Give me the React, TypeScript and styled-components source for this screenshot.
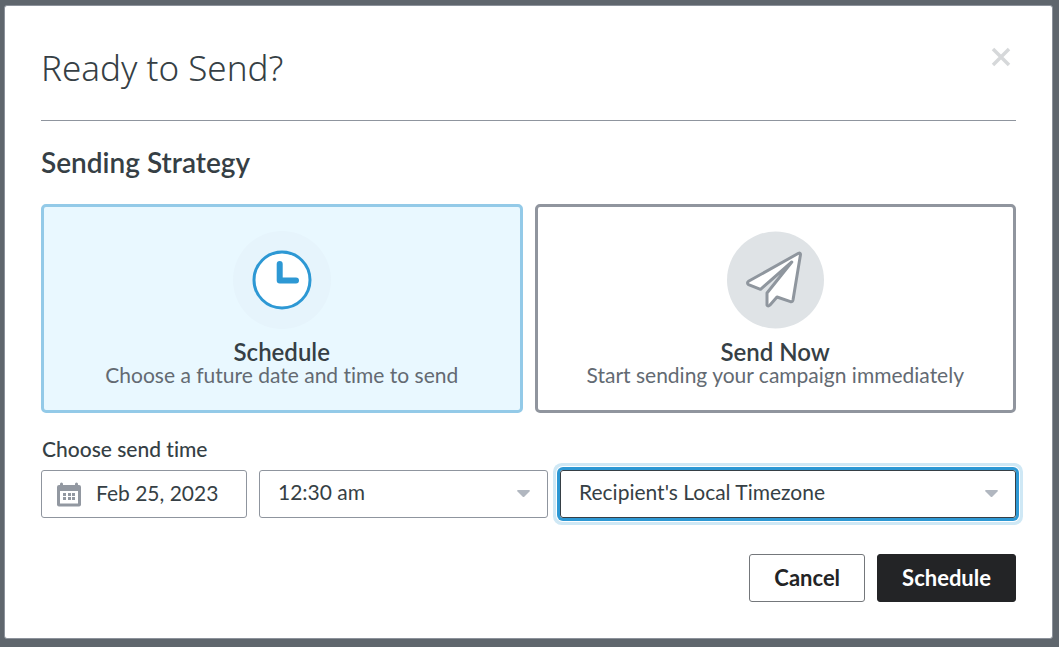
import React, { useState } from "react";
import styled, { createGlobalStyle } from "styled-components";

const GlobalStyle = createGlobalStyle`
  *, *::before, *::after { box-sizing: border-box; }
  body {
    margin: 0;
    background: #5f666d;
    color: #363f45;
    font-family: Lato, "Liberation Sans", sans-serif;
    font-size: 21px;
    line-height: 24px;
    font-variant-ligatures: none;
  }
  h1, h2 { margin: 0; }
  button, input, select { font: inherit; color: inherit; font-variant-ligatures: none; }
`;

const Backdrop = styled.div`
  min-height: 100vh;
  padding: 5px 6px 8px 4px;
`;

const Dialog = styled.main`
  border: 1px solid #8c929b;
  border-radius: 3px;
  background: #fff;
  padding: 36px;
`;

const Header = styled.header`
  display: flex;
  justify-content: space-between;
  align-items: flex-start;
  height: 79px;
  border-bottom: 1px solid #8f959e;
`;

const Title = styled.h1`
  font: 300 35px/52px "Noto Sans", "Open Sans", sans-serif;
`;

const CloseButton = styled.button`
  display: flex;
  padding: 5px;
  border: 0;
  background: none;
  cursor: pointer;
`;

const SectionTitle = styled.h2`
  margin-top: 25px;
  font-size: 28px;
  line-height: 32px;
  font-weight: 600;
`;

const Options = styled.div`
  display: grid;
  grid-template-columns: 1fr 1fr;
  gap: 12px;
  margin-top: 26px;
`;

const Option = styled.label<{ $selected: boolean }>`
  display: flex;
  flex-direction: column;
  align-items: center;
  height: 209px;
  padding-top: 24px;
  border: 3px solid ${(p) => (p.$selected ? "#93cae8" : "#90959e")};
  border-radius: 5px;
  background: ${(p) => (p.$selected ? "#e9f8ff" : "#fff")};
  text-align: center;
  cursor: pointer;
`;

const HiddenRadio = styled.input`
  position: absolute;
  opacity: 0;
  pointer-events: none;
`;

const OptionName = styled.span`
  margin-top: 11px;
  font-size: 24px;
  font-weight: 600;
`;

const OptionText = styled.span`
  color: #636a72;
  line-height: 22px;
`;

const FieldSet = styled.fieldset`
  min-width: 0;
  margin: 24px 0 0;
  padding: 0;
  border: 0;
`;

const Legend = styled.legend`
  padding: 0 1px;
  font-weight: 500;
`;

const Fields = styled.div`
  display: grid;
  grid-template-columns: minmax(0, 206fr) minmax(0, 289fr) minmax(0, 456fr);
  gap: 12px;
  margin-top: 9px;
`;

const Field = styled.div<{ $focused?: boolean }>`
  display: flex;
  align-items: center;
  position: relative;
  height: 48px;
  border: 1px solid ${(p) => (p.$focused ? "#363f45" : "#8f959e")};
  border-radius: 3px;
  box-shadow: ${(p) =>
    p.$focused
      ? "0 0 0 3px #2d98d4, 0 0 0 4px #fff, 0 0 0 7px #cfe8f5"
      : "none"};
`;

const DateInput = styled.input`
  flex: 1;
  min-width: 0;
  height: 100%;
  padding: 0 0 4px 14px;
  border: 0;
  outline: 0;
  background: none;
`;

const CalendarSlot = styled.span`
  display: flex;
  padding: 2px 0 0 14px;
`;

const Select = styled.select`
  appearance: none;
  width: 100%;
  height: 100%;
  padding: 0 48px 4px 18px;
  border: 0;
  outline: 0;
  background: none;
`;

const Arrow = styled.svg`
  position: absolute;
  right: 17px;
  pointer-events: none;
`;

const Footer = styled.footer`
  display: flex;
  justify-content: flex-end;
  gap: 12px;
  margin-top: 36px;
`;

const Button = styled.button<{ $primary?: boolean }>`
  height: 48px;
  padding: 0 24px;
  border: 1px solid ${(p) => (p.$primary ? "#232426" : "#74777b")};
  border-radius: 3px;
  background: ${(p) => (p.$primary ? "#232426" : "#fff")};
  color: ${(p) => (p.$primary ? "#fff" : "#232426")};
  font-size: 22px;
  font-weight: 700;
  cursor: pointer;
`;

const ClockIcon = () => (
  <svg width="98" height="98" viewBox="0 0 98 98" aria-hidden="true">
    <circle cx="49" cy="49" r="49" fill="#e6f4fc" />
    <circle cx="49" cy="49" r="28" fill="#fff" stroke="#2d98d4" strokeWidth="3" />
    <path d="M46.7 33V49.5H63" fill="none" stroke="#2d98d4" strokeWidth="6" strokeLinecap="round" strokeLinejoin="round" />
  </svg>
);

const PlaneIcon = () => (
  <svg width="98" height="98" viewBox="0 0 98 98" aria-hidden="true">
    <circle cx="49.500" cy="49" r="48.500" fill="#dfe3e6" />
    <path
      d="M72.500 22.300 22.500 50.300Q20.500 52 22.500 53.600L34.500 58.300 65.800 31 41 62V74Q42 76 44 74L51 66 64.500 70.700Q66.500 71 67 69L74.500 23.500Q74.500 21.500 72.500 22.300Z"
      fill="#fff"
      stroke="#8f969e"
      strokeWidth="3"
      strokeLinejoin="round"
    />
  </svg>
);

const CalendarIcon = () => (
  <svg width="26" height="26" viewBox="0 0 26 26" aria-hidden="true">
    <path d="M3 3H4V2a1.500 1.500 0 0 1 3 0V3H19V2a1.500 1.500 0 0 1 3 0V3H23a2 2 0 0 1 2 2V22.500a2 2 0 0 1-2 2H3a2 2 0 0 1-2-2V5a2 2 0 0 1 2-2Z" fill="#9298a1" />
    <rect x="4" y="9" width="18" height="12.500" fill="#fff" />
    <path d="M7 11h3v3h-3zM12 11h3v3h-3zM16 11h3v3h-3zM7 15h3v3h-3zM12 15h3v3h-3zM16 15h3v3h-3z" fill="#9298a1" />
  </svg>
);

const ArrowIcon = () => (
  <Arrow width="13" height="8" viewBox="0 0 13 8" aria-hidden="true">
    <path d="M1 0H12Q13.500 .5 12.500 1.500L7.500 6.500Q6.500 7.500 5.500 6.500L.5 1.500Q-.5 .5 1 0Z" fill="#b1b7c0" />
  </Arrow>
);

export default function App() {
  const [strategy, setStrategy] = useState("schedule");
  return (
    <>
      <GlobalStyle />
      <Backdrop>
        <Dialog role="dialog" aria-labelledby="dialog-title">
          <Header>
            <Title id="dialog-title">Ready to Send?</Title>
            <CloseButton type="button" aria-label="Close">
              <svg width="20" height="20" viewBox="0 0 20 20" aria-hidden="true">
                <path d="M2 2 18 18M18 2 2 18" stroke="#d6d8da" strokeWidth="3.500" />
              </svg>
            </CloseButton>
          </Header>
          <SectionTitle id="strategy-title">Sending Strategy</SectionTitle>
          <Options role="radiogroup" aria-labelledby="strategy-title">
            <Option $selected={strategy === "schedule"}>
              <HiddenRadio type="radio" name="strategy" checked={strategy === "schedule"} onChange={() => setStrategy("schedule")} />
              <ClockIcon />
              <OptionName>Schedule</OptionName>
              <OptionText>Choose a future date and time to send</OptionText>
            </Option>
            <Option $selected={strategy === "now"}>
              <HiddenRadio type="radio" name="strategy" checked={strategy === "now"} onChange={() => setStrategy("now")} />
              <PlaneIcon />
              <OptionName>Send Now</OptionName>
              <OptionText>Start sending your campaign immediately</OptionText>
            </Option>
          </Options>
          <FieldSet>
            <Legend>Choose send time</Legend>
            <Fields>
              <Field>
                <CalendarSlot>
                  <CalendarIcon />
                </CalendarSlot>
                <DateInput type="text" aria-label="Date" defaultValue="Feb 25, 2023" />
              </Field>
              <Field>
                <Select aria-label="Time" defaultValue="12:30 am">
                  <option>12:30 am</option>
                </Select>
                <ArrowIcon />
              </Field>
              <Field $focused>
                <Select aria-label="Timezone" defaultValue="Recipient's Local Timezone">
                  <option>Recipient's Local Timezone</option>
                </Select>
                <ArrowIcon />
              </Field>
            </Fields>
          </FieldSet>
          <Footer>
            <Button type="button">Cancel</Button>
            <Button type="button" $primary>Schedule</Button>
          </Footer>
        </Dialog>
      </Backdrop>
    </>
  );
}
